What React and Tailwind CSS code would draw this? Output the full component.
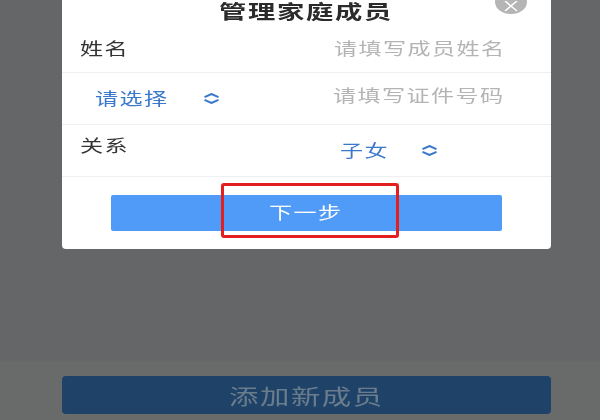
import React from 'react';

// the source shot is stretched sideways, so the glyphs get stretched too
function Wide({ children, className = '' }) {
  return (
    <span className={`inline-block origin-left scale-x-[1.4] whitespace-nowrap leading-none ${className}`}>
      {children}
    </span>
  );
}

function UpDown({ className = '' }) {
  return (
    <svg className={className} width="17" height="11" viewBox="0 0 17 11" fill="none" stroke="#3a78cc" strokeWidth="2">
      <path d="M1.5 4.2 8.5 1 15.5 4.2" />
      <path d="M1.5 6.8 8.5 10 15.5 6.8" />
    </svg>
  );
}

export default function App() {
  return (
    <div className="w-[600px] h-[420px] overflow-hidden bg-[#656667] flex flex-col blur-[0.3px] font-['Noto_Sans_CJK_SC','Noto_Sans',sans-serif]">
      <div className="relative mx-[62px] w-[489px] h-[249px] shrink-0 bg-white rounded-b-[4px]">
        <div className="h-[21px] pl-[157px]">
          <Wide className="text-[19.5px] font-semibold tracking-[1.2px] text-[#2b2b2b]">管理家庭成员</Wide>
        </div>
        <div className="absolute left-[433px] top-[-10px] w-[32px] h-[24px] rounded-[50%] bg-[#b5b5b5] flex items-end justify-center pb-[2px]">
          <svg width="16" height="11" viewBox="0 0 16 11" stroke="#fff" strokeWidth="1.6" fill="none">
            <path d="M2 0 14 10M14 0 2 10" />
          </svg>
        </div>

        <div className="h-[52px] border-b border-[#f0f0f0] flex items-center pl-[18px] pt-[3px]">
          <Wide className="w-[254px] text-[16.5px] tracking-[1px] text-[#333]">姓名</Wide>
          <Wide className="text-[16.5px] tracking-[1px] text-[#b4b4b4]">请填写成员姓名</Wide>
        </div>

        <div className="h-[52px] border-b border-[#f0f0f0] flex items-center pl-[33px]">
          <Wide className="w-[108px] text-[16.5px] tracking-[1px] text-[#3a78cc]">请选择</Wide>
          <UpDown />
          <Wide className="ml-[113px] -mt-[6px] text-[16.5px] tracking-[1px] text-[#b4b4b4]">请填写证件号码</Wide>
        </div>

        <div className="h-[52px] border-b border-[#f0f0f0] flex items-center pl-[18px]">
          <Wide className="w-[260px] -mt-[10px] text-[16.5px] tracking-[1px] text-[#333]">关系</Wide>
          <Wide className="w-[81px] -mt-[1px] text-[16.5px] tracking-[1px] text-[#3a78cc]">子女</Wide>
          <UpDown className="-mt-[1px]" />
        </div>

        <div className="relative mt-[18px] mx-[49px] h-[36px] rounded-[2px] bg-[#4f9bf7] flex items-center pl-[158px]">
          <Wide className="-mt-[1px] text-[16.5px] tracking-[1px] text-white">下一步</Wide>
          <div className="absolute left-[110px] top-[-12px] w-[178px] h-[55px] border-[3px] border-[#e3201f] rounded-[3px]" />
        </div>
      </div>

      <div className="mt-[111px] flex-1 bg-[#696a6a] pt-[15px] border-t border-[#666767]">
        <div className="mx-[62px] w-[489px] h-[38px] rounded-[4px] bg-[#1f4368] flex items-center pl-[167px]">
          <Wide className="text-[21px] tracking-[1.1px] text-[#6b7c8d]">添加新成员</Wide>
        </div>
      </div>
    </div>
  );
}
